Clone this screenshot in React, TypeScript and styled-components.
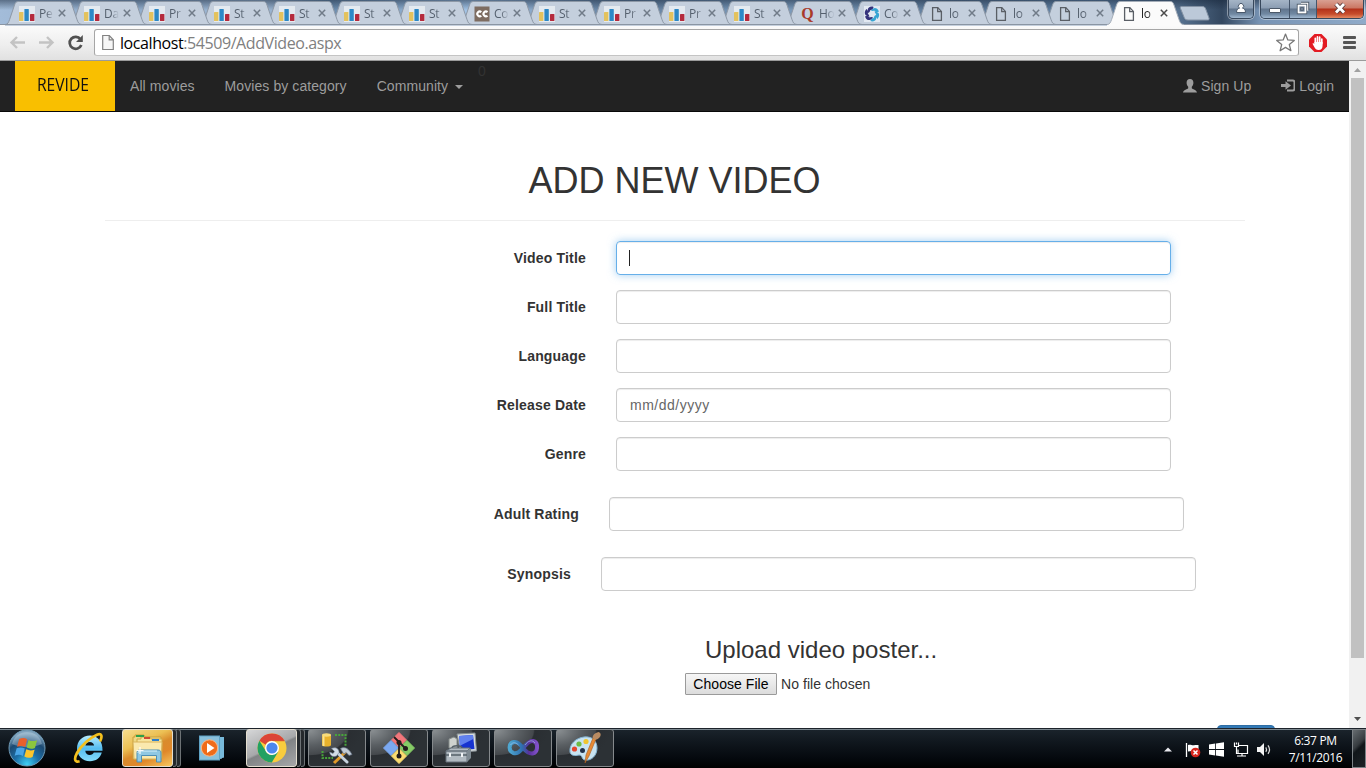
import React from "react";
import styled, { createGlobalStyle, css } from "styled-components";

const Global = createGlobalStyle`
  * { box-sizing: border-box; }
  body { margin: 0; overflow: hidden; }
`;

const ui = `"Open Sans", "Noto Sans", sans-serif`;
const web = `"Liberation Sans", Arial, sans-serif`;

const Desktop = styled.div`
  width: 1366px;
  height: 768px;
  display: flex;
  flex-direction: column;
  background: #fff;
  font-family: ${web};
  overflow: hidden;
`;

/* ---------- browser frame ---------- */

const TabStrip = styled.div`
  height: 25px;
  flex: none;
  display: flex;
  align-items: flex-start;
  padding-left: 5px;
  border-bottom: 1px solid #8a95a3;
  background:
    linear-gradient(180deg, rgba(20, 35, 55, 0.5) 0, rgba(30, 50, 75, 0) 10px),
    linear-gradient(90deg, #a3bcd9 0, #8fabca 120px, #a1bad6 260px, #6d8dae 330px, #a4c5e8 470px, #64809f 620px,
      #7c9cbd 780px, #5e7a99 960px, #6384a8 1090px, #56718f 1180px, #33475f 1222px, #7793b4 1260px, #90abc9 1366px);
`;

const TabBox = styled.div<{ $w: number; $layer: number }>`
  position: relative;
  z-index: ${(p) => p.$layer};
  flex: none;
  width: ${(p) => p.$w}px;
  height: 25px;
  display: flex;
  align-items: center;
  padding: 2px 0 0 14px;
`;

const TabShape = styled.svg`
  position: absolute;
  left: 0;
  top: 0;
  z-index: -1;
`;

const TabIcon = styled.svg`
  width: 16px;
  height: 16px;
  flex: none;
`;

const TabTitle = styled.span<{ $active?: boolean }>`
  width: 17px;
  margin-left: 4px;
  white-space: nowrap;
  font: 12px/16px ${ui};
  letter-spacing: -0.3px;
  color: ${(p) => (p.$active ? "#222" : "#55606e")};
  mask-image: linear-gradient(90deg, #000 7px, rgba(0, 0, 0, 0.1) 14px);
`;

const TabClose = styled.svg`
  width: 8px;
  height: 8px;
  flex: none;
  margin: 0 0 1px 2px;
`;

const NewTab = styled.svg`
  flex: none;
  margin: 5px 0 0 8px;
`;

const WindowControls = styled.div`
  margin-left: auto;
  padding-right: 2px;
  display: flex;
  gap: 6px;
`;

const ControlGroup = styled.div`
  display: flex;
  height: 19px;
  border: 1px solid #37475b;
  border-top: 0;
  border-radius: 0 0 5px 5px;
  box-shadow: 0 0 0 1px rgba(255, 255, 255, 0.4);
  overflow: hidden;
`;

const Control = styled.div<{ $w: number; $danger?: boolean }>`
  width: ${(p) => p.$w}px;
  display: flex;
  align-items: center;
  justify-content: center;
  padding-bottom: 3px;
  background: ${(p) =>
    p.$danger
      ? "linear-gradient(180deg, #d9a092 0, #cb7763 8px, #b3321b 9px, #c64c2b 14px, #e58a62 18px)"
      : "linear-gradient(180deg, #a5b5c7 0, #8b9db3 8px, #61758d 9px, #7088a2 14px, #a1b8d0 18px)"};
  & + & { border-left: 1px solid #45566b; }
`;

const Toolbar = styled.div`
  height: 36px;
  flex: none;
  display: flex;
  align-items: flex-start;
  padding: 4px 9px 0 9px;
  background: linear-gradient(180deg, #fbfbfb 0, #eeeeee 20px, #e1e1e1 35px);
  border-bottom: 1px solid #9b9b9b;
`;

const NavGlyph = styled.svg<{ $ml?: number }>`
  flex: none;
  margin: 5px 0 0 ${(p) => p.$ml ?? 0}px;
`;

const AddressBar = styled.div`
  width: 1205px;
  height: 27px;
  margin-left: 10px;
  display: flex;
  align-items: center;
  padding: 0 3px 0 7px;
  background: #fff;
  border: 1px solid #a6a6a6;
  border-bottom-color: #c4c4c4;
  border-radius: 3px;
`;

const Url = styled.span`
  flex: 1;
  margin-left: 6px;
  font: 16px/22px ${ui};
  letter-spacing: -0.42px;
  color: #808080;
  b { font-weight: 400; color: #000; }
`;

/* ---------- page ---------- */

const Viewport = styled.div`
  height: 667px;
  flex: none;
  display: flex;
  overflow: hidden;
`;

const Page = styled.div`
  width: 1349px;
  height: 667px;
  overflow: hidden;
  color: #333;
`;

const Navbar = styled.nav`
  position: relative;
  height: 51px;
  display: flex;
  padding: 0 0 0 15px;
  background: #222;
  border-bottom: 1px solid #080808;
`;

const Brand = styled.div`
  width: 100px;
  height: 50px;
  display: flex;
  justify-content: center;
  background: #f9bf00;
  color: #111;
  font: 18px/46px ${ui};
  padding-right: 5px;
  span { transform: scaleX(0.87); }
`;

const NavLink = styled.a`
  display: flex;
  align-items: center;
  padding: 0 15px;
  color: #9d9d9d;
  font-size: 14px;
  letter-spacing: 0.08px;
  white-space: nowrap;
  svg { margin-right: 4px; }
`;

const Caret = styled.i`
  margin: 2px 0 0 7px;
  border-top: 4px solid #9d9d9d;
  border-left: 4px solid transparent;
  border-right: 4px solid transparent;
`;

const NavRight = styled.div`
  margin-left: auto;
  display: flex;
`;

const Counter = styled.span`
  position: absolute;
  left: 478px;
  top: 2px;
  font-size: 14px;
  color: #333;
`;

const Container = styled.main`
  width: 1140px;
  margin: 0 0 0 105px;
  display: flex;
  flex-direction: column;
`;

const Title = styled.h1`
  margin: 49px 0 0;
  padding-right: 1px;
  font-size: 36px;
  line-height: 40px;
  font-weight: 400;
  text-align: center;
`;

const Rule = styled.hr`
  width: 100%;
  margin: 19px 0 20px;
  border: 0;
  border-top: 1px solid #eee;
`;

const Row = styled.div<{ $inset: number; $after: number }>`
  display: flex;
  align-items: center;
  height: 34px;
  margin: 0 ${(p) => p.$inset}px ${(p) => p.$after}px 0;
`;

const Label = styled.label`
  flex: 1;
  text-align: right;
  padding-right: 30px;
  font-size: 14px;
  font-weight: 700;
  letter-spacing: 0.18px;
`;

const Field = styled.div<{ $w: number; $focus?: boolean }>`
  width: ${(p) => p.$w}px;
  height: 34px;
  display: flex;
  align-items: center;
  padding: 0 12px;
  border: 1px solid #ccc;
  border-radius: 4px;
  box-shadow: inset 0 1px 1px rgba(0, 0, 0, 0.075);
  font-size: 14px;
  letter-spacing: 0.5px;
  color: #666;
  ${(p) =>
    p.$focus &&
    css`
      border-color: #66afe9;
      box-shadow: inset 0 1px 1px rgba(0, 0, 0, 0.075), 0 0 8px rgba(102, 175, 233, 0.6);
    `}
`;

const FieldText = styled.span`
  margin-left: 1px;
`;

const TextCursor = styled.i`
  width: 1px;
  height: 16px;
  background: #222;
`;

const Upload = styled.section`
  margin: 31px 0 0 580px;
`;

const UploadTitle = styled.h3`
  margin: 15px 0 10px 20px;
  font-size: 24px;
  line-height: 26px;
  font-weight: 400;
`;

const FilePicker = styled.div`
  display: flex;
  align-items: center;
  height: 22px;
  font-size: 14px;
  letter-spacing: 0.05px;
`;

const FileButton = styled.span`
  width: 92px;
  height: 22px;
  margin-right: 4px;
  border: 1px solid #9a9a9a;
  border-radius: 1px;
  background: linear-gradient(180deg, #f6f6f6, #dcdcdc);
  color: #000;
  line-height: 20px;
  text-align: center;
`;

const SubmitButton = styled.div`
  width: 58px;
  height: 34px;
  flex: none;
  margin: 30px 0 0 1112px;
  border-radius: 4px;
  background: #337ab7;
  border: 1px solid #2e6da4;
`;

const ScrollTrack = styled.div`
  width: 17px;
  display: flex;
  flex-direction: column;
  align-items: center;
  background: #f1f1f1;
`;

const ScrollThumb = styled.div`
  width: 13px;
  height: 580px;
  background: #c1c1c1;
`;

const ScrollArrow = styled.svg`
  width: 17px;
  height: 17px;
  flex: none;
  &:last-child { margin-top: auto; }
`;

/* ---------- taskbar ---------- */

const Taskbar = styled.div`
  height: 40px;
  flex: none;
  display: flex;
  background: linear-gradient(180deg, #1c232b 0, #1c232b 1px, #7c8890 1px, #7c8890 2px, #1a232b 2px, #10171e 14px, #05090e 30px, #000 40px);
`;

const Slot = styled.div<{ $w: number; $ml?: number }>`
  width: ${(p) => p.$w}px;
  height: 40px;
  flex: none;
  margin-left: ${(p) => p.$ml ?? 0}px;
  display: flex;
  align-items: center;
  justify-content: center;
`;

const tones = {
  dark: "radial-gradient(ellipse 95% 95% at 0 0, #8c9194 0, #5a5f63 45%, #44484c 72%, #2a2e32 75%, #2c3135 100%)",
  light: "linear-gradient(155deg, #d6d7d8 0, #a7a8aa 48%, #818385 52%, #a6a7a9 100%)",
  gold: "linear-gradient(155deg, #f6dd8f 0, #ecc054 35%, #d98b2c 52%, #e0872a 70%, #f7c860 100%)",
};

const TaskButton = styled.div<{ $w: number; $ml: number; $tone: keyof typeof tones }>`
  width: ${(p) => p.$w}px;
  height: 38px;
  flex: none;
  margin: 1px 0 0 ${(p) => p.$ml}px;
  display: flex;
  align-items: center;
  justify-content: center;
  border: 1px solid ${(p) => (p.$tone === "dark" ? "#85898c" : "#e4ded0")};
  border-radius: 3px;
  background: ${(p) => tones[p.$tone]};
`;

const StackEdge = styled.div`
  width: 4px;
  height: 38px;
  flex: none;
  margin-top: 1px;
  border: 1px solid #6d7275;
  border-left: 0;
  border-radius: 0 3px 3px 0;
  background: #24282c;
`;

const Tray = styled.div`
  margin-left: auto;
  display: flex;
  align-items: center;
`;

const TrayIcon = styled.svg<{ $ml: number }>`
  flex: none;
  margin: 3px 0 0 ${(p) => p.$ml}px;
`;

const Clock = styled.div`
  width: 73px;
  margin: 2px 0 0 7px;
  text-align: center;
  color: #fff;
  font: 12px/17px ${ui};
  letter-spacing: -0.35px;
`;

const ShowDesktop = styled.div`
  width: 14px;
  height: 39px;
  margin: 1px 0 0 0;
  border: 1px solid #7c8286;
  background: linear-gradient(135deg, #666c70 0, #363b3f 40%, #11161a 50%, #1d2226 100%);
`;

type Kind = "chart" | "cc" | "q" | "swirl" | "doc";

function DocGlyph() {
  return (
    <g fill="none" stroke="#5a5f66" strokeWidth="1.3">
      <path d="M3.6 1.6h5.2l3.6 3.8v9h-8.8z" />
      <path d="M8.7 1.8v3.8h3.6" />
    </g>
  );
}

function Favicon({ kind }: { kind: Kind }) {
  return (
    <TabIcon viewBox="0 0 16 16">
      {kind === "chart" && (
        <>
          <path fill="#e4eaf0" d="M0 0h16v16H0z" />
          <rect x="0" y="6" width="4.4" height="9" rx="0.6" fill="#e3c25e" />
          <rect x="5.4" y="3" width="4.4" height="12" rx="0.6" fill="#2c88c6" />
          <rect x="11" y="8" width="4.4" height="7" rx="0.6" fill="#b42a3d" />
        </>
      )}
      {kind === "cc" && (
        <>
          <rect x="0.5" y="0.5" width="15" height="15" fill="#7d6c61" />
          <g fill="none" stroke="#fff" strokeWidth="2.1">
            <path d="M7.3 6.1a2.4 2.4 0 1 0 0 3.6M13.5 6.1a2.4 2.4 0 1 0 0 3.6" />
          </g>
        </>
      )}
      {kind === "q" && (
        <text x="8.5" y="13" textAnchor="middle" fontFamily="Liberation Serif, serif" fontWeight="700" fontSize="16" fill="#a93a2a">
          Q
        </text>
      )}
      {kind === "swirl" && (
        <>
          <path fill="#e2e9f2" d="M0 0h16v16H0z" />
          {[0, 60, 120, 180, 240, 300].map((a) => (
            <path
              key={a}
              transform={`rotate(${a} 8 8)`}
              d="M3.8 4.2C3.4 1.8 6.5-.2 9.6.9L8.3 3.9C6.9 3.4 6 4 5.700 5.800L4.300 7.200z"
              fill={a < 60 || a > 200 ? "#34327c" : "#37a5d3"}
            />
          ))}
        </>
      )}
      {kind === "doc" && <DocGlyph />}
    </TabIcon>
  );
}

interface TabProps {
  kind: Kind;
  title: string;
  layer: number;
  active?: boolean;
  w?: number;
}

function Tab({ kind, title, layer, active, w = 65 }: TabProps) {
  return (
    <TabBox $w={w} $layer={layer}>
      <TabShape width="78" height="26" viewBox="0 0 78 26">
        <path
          d="M0 24.5C3 24.5 3.6 22 4.6 19.5L9.5 5C10.4 2.6 11 1.5 13.5 1.5H63C65.5 1.5 66.2 2.6 67 5L72 19.5C73 22 73.5 24.5 77 24.5V26H0z"
          fill={active ? "#fbfbfb" : "#c4cfdd"}
        />
        <path
          d="M0 24.5C3 24.5 3.6 22 4.6 19.5L9.5 5C10.4 2.6 11 1.5 13.5 1.5H63C65.5 1.5 66.2 2.6 67 5L72 19.5C73 22 73.5 24.5 77 24.5"
          fill="none"
          stroke={active ? "#a4adb8" : "#8d98a6"}
        />
        {!active && <path d="M0 24.5H78" stroke="#8a95a3" />}
      </TabShape>
      <Favicon kind={kind} />
      <TabTitle $active={active}>{title}</TabTitle>
      <TabClose viewBox="0 0 8 8">
        <path d="M.8.8l6.400 6.400M7.200.8L.8 7.200" stroke={active ? "#4b4b4b" : "#707b88"} strokeWidth="1.5" />
      </TabClose>
    </TabBox>
  );
}

const tabs: [Kind, string][] = [
  ["chart", "Pe"], ["chart", "Da"], ["chart", "Pr"], ["chart", "St"], ["chart", "St"], ["chart", "St"], ["chart", "St"],
  ["cc", "Co"], ["chart", "St"], ["chart", "Pr"], ["chart", "Pr"], ["chart", "St"], ["q", "Ho"], ["swirl", "Co"],
  ["doc", "lo"], ["doc", "lo"], ["doc", "lo"], ["doc", "lo"],
];

function BrowserFrame() {
  return (
    <>
      <TabStrip>
        {tabs.map(([kind, title], i) => {
          const active = i === tabs.length - 1;
          return (
            <Tab key={i} kind={kind} title={title} w={i > 13 ? 64 : 65} active={active} layer={active ? 30 : 20 - i} />
          );
        })}
        <NewTab width="32" height="16" viewBox="0 0 32 16">
          <path d="M2.5 1.5H23c2 0 3 .6 3.7 2.500L30 13c.4 1.500 0 2-1.500 2H9c-2 0-3-.5-3.700-2.200L1.500 3.500c-.5-1.300-.3-2 1-2z" fill="#bcc9d9" stroke="#8492a4" />
        </NewTab>
        <WindowControls>
          <ControlGroup>
            <Control $w={24}>
              <svg width="12" height="12" viewBox="0 0 12 12">
                <path d="M1.500 10.500c0-3 1.500-4 3-4.300a2.600 2.600 0 1 1 3 0c1.500.3 3 1.300 3 4.300z" fill="#fff" stroke="#49586b" />
              </svg>
            </Control>
          </ControlGroup>
          <ControlGroup>
            <Control $w={28}>
              <svg width="14" height="14" viewBox="0 0 14 14">
                <rect x="1.500" y="7.500" width="11" height="4" rx="0.500" fill="#fff" stroke="#4b5868" />
              </svg>
            </Control>
            <Control $w={27}>
              <svg width="14" height="14" viewBox="0 0 14 14">
                <g fill="none">
                  <path d="M5 2.500h6.500V9" stroke="#4b5868" strokeWidth="3.400" />
                  <path d="M5 2.500h6.500V9H10" stroke="#fff" strokeWidth="1.500" />
                  <rect x="2.500" y="4.500" width="7" height="7" stroke="#4b5868" strokeWidth="3.400" />
                  <rect x="2.500" y="4.500" width="7" height="7" fill="#7b8ca1" stroke="#fff" strokeWidth="1.700" />
                  <rect x="4.700" y="6.700" width="2.600" height="2.600" stroke="#4b5868" strokeWidth="0.800" />
                </g>
              </svg>
            </Control>
            <Control $w={47} $danger>
              <svg width="14" height="12" viewBox="0 0 14 12">
                <path d="M3 2l8 8.500M11 2l-8 8.500" stroke="#5a3b3b" strokeWidth="4.600" />
                <path d="M3 2l8 8.500M11 2l-8 8.500" stroke="#fff" strokeWidth="2.800" />
              </svg>
            </Control>
          </ControlGroup>
        </WindowControls>
      </TabStrip>
      <Toolbar>
        <NavGlyph width="17" height="17" viewBox="0 0 17 17">
          <path d="M8 3L2.500 8.500 8 14M2.500 8.500H16" fill="none" stroke="#c3c3c3" strokeWidth="2.400" />
        </NavGlyph>
        <NavGlyph $ml={12} width="17" height="17" viewBox="0 0 17 17">
          <path d="M9 3l5.500 5.500L9 14M14.500 8.500H1" fill="none" stroke="#c3c3c3" strokeWidth="2.400" />
        </NavGlyph>
        <NavGlyph $ml={12} width="17" height="17" viewBox="0 0 17 17">
          <path d="M13.500 5.200A6 6 0 1 0 14.300 11" fill="none" stroke="#505050" strokeWidth="2.700" />
          <path d="M15.800 1v7H9z" fill="#505050" />
        </NavGlyph>
        <AddressBar>
          <svg width="12" height="17" viewBox="0 0 12 17">
            <path d="M.7 1.500h6.600l4 4.300v9.700H.7z" fill="#f6f6f6" stroke="#828282" strokeWidth="1.200" />
            <path d="M7.200 1.700v4.200h4" fill="none" stroke="#828282" strokeWidth="1.200" />
          </svg>
          <Url><b>localhost</b>:54509/AddVideo.aspx</Url>
          <svg width="19" height="19" viewBox="0 0 18 18">
            <path d="M9 1l2.200 5.600 6.100.4-4.700 3.900 1.500 5.900L9 13.600l-5.100 3.200 1.500-5.900L.7 7l6.100-.4z" fill="#fff" stroke="#777" strokeWidth="1.200" strokeLinejoin="round" />
          </svg>
        </AddressBar>
        <NavGlyph $ml={10} width="18" height="18" viewBox="0 0 18 18">
          <path d="M5.500 0h7L18 5.500v7L12.500 18h-7L0 12.500v-7z" fill="#e31b23" />
          <path d="M6.300 9V4.300M8.500 8.500V2.800M10.700 8.500V3.200M12.800 9.500V5" stroke="#fff" strokeWidth="1.700" strokeLinecap="round" />
          <path d="M5.400 8h8.200v3.500c0 3-1.500 4.500-4 4.500-2.300 0-3.300-1.200-4.300-3L3.500 9.800c.7-.9 1.500-.5 1.900.2z" fill="#fff" />
        </NavGlyph>
        <NavGlyph $ml={16} width="13" height="17" viewBox="0 0 13 17">
          <path d="M1 3.500h11M1 8.500h11M1 13.500h11" stroke="#555" strokeWidth="2.800" strokeLinecap="round" />
        </NavGlyph>
      </Toolbar>
    </>
  );
}

const fields = [
  { label: "Video Title", inset: 74, width: 555, after: 15, focus: true },
  { label: "Full Title", inset: 74, width: 555, after: 15 },
  { label: "Language", inset: 74, width: 555, after: 15 },
  { label: "Release Date", inset: 74, width: 555, after: 15, value: "mm/dd/yyyy" },
  { label: "Genre", inset: 74, width: 555, after: 26 },
  { label: "Adult Rating", inset: 61, width: 575, after: 26 },
  { label: "Synopsis", inset: 49, width: 595, after: 0 },
];

function WebPage() {
  return (
    <Viewport>
      <Page>
        <Navbar>
          <Brand><span>REVIDE</span></Brand>
          <NavLink>All movies</NavLink>
          <NavLink>Movies by category</NavLink>
          <NavLink>Community<Caret /></NavLink>
          <Counter>0</Counter>
          <NavRight>
            <NavLink>
              <svg width="14" height="14" viewBox="0 0 14 14">
                <path d="M7 0c2.300 0 3.400 1.600 3.400 3.800 0 1.700-.7 3-1.600 3.900v1.500c.3.800 5.200 1.700 5.200 4.300H0c0-2.600 4.900-3.500 5.200-4.300V7.700C4.300 6.800 3.600 5.500 3.600 3.800 3.600 1.600 4.700 0 7 0z" fill="#9d9d9d" />
              </svg>
              Sign Up
            </NavLink>
            <NavLink>
              <svg width="14" height="14" viewBox="0 0 14 14">
                <path d="M6 1.500h5.800c1 0 1.700.7 1.700 1.700v6.600c0 1-.7 1.700-1.700 1.700H6" fill="none" stroke="#9d9d9d" strokeWidth="2" />
                <path d="M0 5h4.500V2.300L10 6.500l-5.500 4.200V8H0z" fill="#9d9d9d" />
              </svg>
              Login
            </NavLink>
          </NavRight>
        </Navbar>
        <Container>
          <Title>ADD NEW VIDEO</Title>
          <Rule />
          {fields.map((f) => (
            <Row key={f.label} $inset={f.inset} $after={f.after}>
              <Label>{f.label}</Label>
              <Field $w={f.width} $focus={f.focus}>
                {f.focus && <TextCursor />}
                {f.value && <FieldText>{f.value}</FieldText>}
              </Field>
            </Row>
          ))}
          <Upload>
            <UploadTitle>Upload video poster...</UploadTitle>
            <FilePicker>
              <FileButton>Choose File</FileButton>No file chosen
            </FilePicker>
          </Upload>
          <SubmitButton />
        </Container>
      </Page>
      <ScrollTrack>
        <ScrollArrow viewBox="0 0 17 17"><path d="M5 11l3.500-4 3.500 4z" fill="#a0a0a0" /></ScrollArrow>
        <ScrollThumb />
        <ScrollArrow viewBox="0 0 17 17"><path d="M5 6h7l-3.500 4z" fill="#505050" /></ScrollArrow>
      </ScrollTrack>
    </Viewport>
  );
}

function StartOrb() {
  return (
    <svg width="38" height="38" viewBox="0 0 38 38">
      <defs>
        <radialGradient id="orb" cx="50%" cy="95%" r="85%">
          <stop offset="0" stopColor="#3fd0f5" />
          <stop offset="0.400" stopColor="#1c6fa8" />
          <stop offset="0.750" stopColor="#1d4a72" />
          <stop offset="1" stopColor="#7fa3bd" />
        </radialGradient>
      </defs>
      <circle cx="19" cy="19" r="18" fill="url(#orb)" stroke="#6f9ab5" />
      <path d="M4 15C6 7 12 3 19 3s13 4 15 12c-9 4-21 4-30 0z" fill="#cfe3ee" opacity="0.350" />
      <g transform="translate(-1.200 -1.200) scale(1.070)">
        <path d="M11.500 10.500c3-1.500 5.500-1.300 7.500.2l-1.800 7.300c-2.300-1.300-4.700-1.500-7.600-.2z" fill="#e8602c" />
        <path d="M20.300 11.300c2.500 1.400 5 1.500 8 .3l-2 7.200c-2.900 1.200-5.300 1-7.700-.3z" fill="#8cc63e" />
        <path d="M9.200 19.200c3-1.300 5.400-1 7.600.2L15 26.300c-2.300-1.400-4.800-1.500-7.700-.2z" fill="#4aa5e6" />
        <path d="M18.200 20.100c2.500 1.300 5 1.400 7.800.3l-1.900 6.800c-2.900 1.200-5.300 1-7.700-.4z" fill="#fbc52c" />
      </g>
    </svg>
  );
}

function IeIcon() {
  return (
    <svg width="32" height="32" viewBox="0 0 32 32">
      <defs>
        <linearGradient id="ie" x1="0" y1="0" x2="0" y2="1">
          <stop offset="0" stopColor="#b9ecfd" />
          <stop offset="0.500" stopColor="#55bdf0" />
          <stop offset="1" stopColor="#86dcfb" />
        </linearGradient>
      </defs>
      <path d="M28.800 20.500h-8c-.7 1.600-2 2.400-4 2.400-2.700 0-4.400-1.500-4.500-4.200h17.200C30 9.500 24.500 3.500 17 3.500 9.300 3.500 4 9 4 16.300s5.300 12.900 13 12.900c5.900 0 10.200-3.200 11.800-8.700zM12.400 13.600c.5-2.200 2.100-3.500 4.400-3.500s3.900 1.300 4.300 3.500z" fill="url(#ie)" />
      <path d="M27 9.500C29.800 4 28.500.8 24 2.700 17.500 5.400 8 13.500 4 21c-3 5.700-2.600 9.800 2.600 8.300" fill="none" stroke="#f4c01e" strokeWidth="2.700" />
    </svg>
  );
}

function ExplorerIcon() {
  return (
    <svg width="32" height="32" viewBox="0 0 32 32">
      <path d="M3 3h9l1 2h16v22H1V5h2z" fill="#efd985" stroke="#c99f3d" />
      <path d="M9 5h9l1 2h11v19H5V7h4z" fill="#f7e49d" stroke="#d0a848" />
      <path d="M4 3h8v2H4z" fill="#2fa04a" />
      <path d="M12 5h6v2h-6z" fill="#cf4a33" />
      <path d="M20 7h7v2h-7z" fill="#2d7ecb" />
      <path d="M1 10h29l-1 17H2z" fill="#fae9ae" stroke="#d9b45c" />
      <path d="M5 30v-9c0-2 1-3 3-3h18c2 0 3 1 3 3v9h-4.500v-6.500h-15V30z" fill="#8fc8e3" stroke="#4d8fb5" />
      <path d="M6 21c0-1.500.8-2 2-2h17" fill="none" stroke="#d7f1fb" />
      <path d="M8 15v7M4.500 18.500h7" stroke="#fff" strokeWidth="1.200" opacity="0.900" />
    </svg>
  );
}

function MediaIcon() {
  return (
    <svg width="28" height="28" viewBox="0 0 28 28">
      <path d="M9 3h17v20l-6 3H9z" fill="#4a9bc6" />
      <path d="M23 3v22M25 3v21" stroke="#a5d8ef" />
      <rect x="1.500" y="2" width="20" height="24" fill="#8ac1dd" stroke="#5fa2c5" />
      <circle cx="11.500" cy="14" r="8.200" fill="#ef6c1b" stroke="#f9b989" />
      <path d="M9 9l7.500 5L9 19z" fill="#fff" />
    </svg>
  );
}

function ChromeIcon() {
  return (
    <svg width="32" height="32" viewBox="0 0 32 32">
      <circle cx="16" cy="16" r="14.500" fill="#f8cc3e" />
      <path d="M3.400 8.800A14.500 14.500 0 0 1 28.600 8.800H16a7 7 0 0 0-6.300 4z" fill="#dc4437" />
      <path d="M3.400 8.800A14.500 14.500 0 0 0 15.800 30.500L22.200 19.700 16 23a7 7 0 0 1-6.500-4.500z" fill="#22a162" />
      <path d="M16 8.800h12.600" stroke="#c9392c" strokeWidth="0.600" />
      <circle cx="16" cy="16" r="7" fill="#fff" />
      <circle cx="16" cy="16" r="5.600" fill="#4c87ee" />
    </svg>
  );
}

function SqlToolsIcon() {
  return (
    <svg width="34" height="34" viewBox="0 0 34 34">
      <path d="M2 4v10c0 2 9 2 9 0V4z" fill="#e9b22c" />
      <path d="M3.500 5v10" stroke="#fae38f" strokeWidth="2" />
      <ellipse cx="6.500" cy="4" rx="4.500" ry="1.700" fill="#f8dc7b" />
      <path d="M15 4h10.500v11M2.500 20v7H13" fill="none" stroke="#48a53a" strokeWidth="2" strokeDasharray="2 1.200" />
      <path d="M27 19.500L14 32" stroke="#e19a2a" strokeWidth="3" />
      <path d="M16 20.500l11 10.500" stroke="#c7d3df" strokeWidth="3" strokeLinecap="round" />
      <path d="M11.500 17.500l3.200 3-1.700 2-3.300-1.500c.3 4 3.300 5.300 6.800 4l2.500-3.500c.3-3.500-3.500-6-7.500-4z" fill="#d3dde7" stroke="#74859a" strokeWidth="0.600" />
      <path d="M20.500 17.500c4.500-2.500 8.500.5 11.500 6l-3 1-2.800-3-2.500 1.500z" fill="#c1cad4" stroke="#657486" strokeWidth="0.700" />
    </svg>
  );
}

function GitIcon() {
  return (
    <svg width="34" height="34" viewBox="0 0 34 34">
      <g strokeWidth="1" strokeLinejoin="round">
        <path d="M17 1.500l7.500 7.500-7.500 7.500L9.500 9z" fill="#f2767b" stroke="#f2767b" />
        <path d="M9 9.500l7.500 7.500L9 24.500 1.500 17z" fill="#7ba9f2" stroke="#7ba9f2" />
        <path d="M25 9.500l7.500 7.500-7.500 7.500-7.500-7.500z" fill="#85cb66" stroke="#85cb66" />
        <path d="M17 17.500l7.500 7.500-7.500 7.500L9.500 25z" fill="#fbdc70" stroke="#fbdc70" />
      </g>
      <path d="M17 10v15M17 11l7 7M12 6l5 5" stroke="#241d1c" strokeWidth="1.800" />
      <g fill="#241d1c">
        <circle cx="17" cy="11.500" r="2.500" />
        <circle cx="23.500" cy="17.500" r="2.500" />
        <circle cx="17" cy="25" r="2.500" />
      </g>
    </svg>
  );
}

function ToolboxIcon() {
  return (
    <svg width="34" height="34" viewBox="0 0 34 34">
      <path d="M13 3l18-1 1.500 18-16 1z" fill="#d5dbdd" stroke="#858d91" />
      <path d="M15 5l14-1 1.500 14-13.500 1z" fill="#1733d0" />
      <path d="M15 5l14-1 .3 4-13.800 7z" fill="#6181ee" />
      <path d="M5 8l5-2 3 2v9H5z" fill="#ced2cf" stroke="#858b89" />
      <path d="M2 20l5-3h19l-3 3zM2 20h21v11H2z" fill="#b1bac1" stroke="#66717a" />
      <path d="M23 20l4-3v10l-4 4z" fill="#7e8991" />
      <path d="M8 17c0-3 10-3 10 0M2 24h21" fill="none" stroke="#56616a" strokeWidth="1.300" />
      <path d="M6 22v4M18 22v4" stroke="#f0f3f5" strokeWidth="2" />
    </svg>
  );
}

function InfinityIcon() {
  return (
    <svg width="32" height="22" viewBox="0 0 32 22">
      <defs>
        <linearGradient id="inf" x1="0" x2="1">
          <stop offset="0" stopColor="#4ea6d0" />
          <stop offset="0.450" stopColor="#2f6fae" />
          <stop offset="0.700" stopColor="#59319b" />
          <stop offset="1" stopColor="#8050c8" />
        </linearGradient>
      </defs>
      <path d="M16 11C12 5.500 9.500 4.500 7 5 1.500 6 1 14 6.500 16c4 1.300 6.500-2 9.500-5s6-8 10-7c6 1.500 5 11.500-.5 12.500C21.500 17 19 14.500 16 11z" fill="none" stroke="url(#inf)" strokeWidth="4" />
      <path d="M3.500 8c2-3 5-3 8 0M18 8c3-4 7-6 10-2" fill="none" stroke="#a9c9ef" strokeWidth="0.900" opacity="0.700" />
    </svg>
  );
}

function PaintIcon() {
  return (
    <svg width="34" height="34" viewBox="0 0 34 34">
      <path d="M16 6c8-1 13 4 13 11 0 8-6 13-12 12-4-.7-2-5-6-5-4 1-8 1-9-3C1 13 8 7 16 6z" fill="#c8e3f1" stroke="#84b4d2" />
      <circle cx="6.500" cy="18" r="2.600" fill="#e4472f" />
      <circle cx="11" cy="13" r="2.600" fill="#6dbb45" />
      <circle cx="18" cy="10.500" r="2.600" fill="#f0c52e" />
      <circle cx="14.500" cy="19.500" r="2.500" fill="#22324a" />
      <path d="M28 8l-7 17-4 7 1-8 7-17z" fill="#e68a35" stroke="#a65a1c" strokeWidth="0.600" />
      <path d="M24.500 7c0-3 2-5 6-6 3 1 2.500 4 1 5.500-1.500 2-3 1.500-4 2.500z" fill="#b98b62" />
    </svg>
  );
}

function SystemTaskbar() {
  return (
    <Taskbar>
      <Slot $w={38} $ml={8}><StartOrb /></Slot>
      <Slot $w={32} $ml={27}><IeIcon /></Slot>
      <TaskButton $w={51} $ml={17} $tone="gold"><ExplorerIcon /></TaskButton>
      <StackEdge /><StackEdge />
      <Slot $w={28} $ml={17}><MediaIcon /></Slot>
      <TaskButton $w={51} $ml={20} $tone="light"><ChromeIcon /></TaskButton>
      <StackEdge /><StackEdge />
      <TaskButton $w={58} $ml={3} $tone="dark"><SqlToolsIcon /></TaskButton>
      <TaskButton $w={58} $ml={4} $tone="dark"><GitIcon /></TaskButton>
      <TaskButton $w={58} $ml={4} $tone="dark"><ToolboxIcon /></TaskButton>
      <TaskButton $w={58} $ml={4} $tone="dark"><InfinityIcon /></TaskButton>
      <TaskButton $w={58} $ml={4} $tone="dark"><PaintIcon /></TaskButton>
      <Tray>
        <TrayIcon $ml={0} width="8" height="5" viewBox="0 0 8 5"><path d="M0 4.500L4 .5l4 4z" fill="#e8e8ee" /></TrayIcon>
        <TrayIcon $ml={13} width="16" height="16" viewBox="0 0 16 16">
          <path d="M1.500 1v14" stroke="#fff" strokeWidth="1.300" />
          <path d="M3 3c3-1 4 1 7 0h3.500v6.500H9C7 8.500 5 9.500 3 9.500z" fill="#fff" />
          <circle cx="10.500" cy="10.500" r="4.800" fill="#d7261d" />
          <path d="M8.500 8.500l4 4M12.500 8.500l-4 4" stroke="#fff" strokeWidth="1.500" />
        </TrayIcon>
        <TrayIcon $ml={8} width="15" height="15" viewBox="0 0 15 15">
          <path d="M0 2.500l6.200-1V7H0zM7 1.400L15 .2V7H7zM0 8h6.200v5.500l-6.200-1zM7 8h8v6.800l-8-1.200z" fill="#fff" />
        </TrayIcon>
        <TrayIcon $ml={9} width="16" height="15" viewBox="0 0 16 15">
          <path d="M6 3.500h8.500v8H5v-4" fill="none" stroke="#fff" strokeWidth="1.200" />
          <path d="M4 14h9M9 11.500V14M1.500.5v4h4v-4M3.500 4.500v7H5M3.500.5v2" fill="none" stroke="#fff" strokeWidth="1.200" />
        </TrayIcon>
        <TrayIcon $ml={8} width="15" height="15" viewBox="0 0 15 15">
          <path d="M0 5h3l4-4v13l-4-4H0z" fill="#f4f4f4" />
          <path d="M8.800 5.300c1 1.500 1 3 0 4.500M11 3.300c2 2.800 2 5.700 0 8.500" fill="none" stroke="#ddd" strokeWidth="1.200" />
        </TrayIcon>
        <Clock>6:37 PM<br />7/11/2016</Clock>
        <ShowDesktop />
      </Tray>
    </Taskbar>
  );
}

export default function App() {
  return (
    <Desktop>
      <Global />
      <BrowserFrame />
      <WebPage />
      <SystemTaskbar />
    </Desktop>
  );
}
